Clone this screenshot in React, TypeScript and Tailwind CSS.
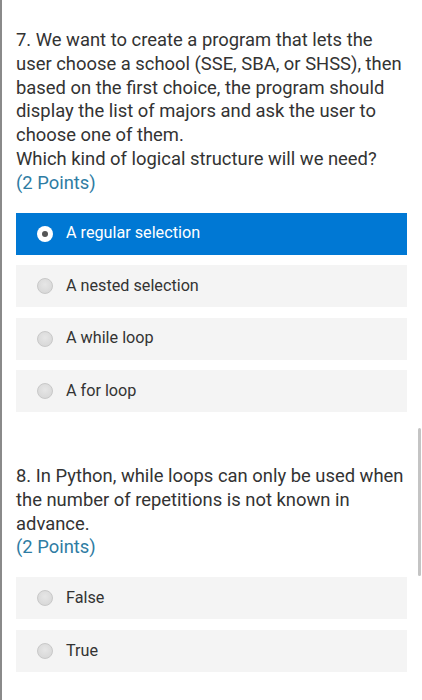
import React from "react";

const font = { fontFamily: "Roboto, 'Noto Sans', sans-serif" };

function Radio({ selected }: { selected?: boolean }) {
  if (selected) {
    return (
      <span className="flex h-4 w-4 shrink-0 items-center justify-center rounded-full bg-white">
        <span className="h-[6px] w-[6px] rounded-full bg-[#555555]" />
      </span>
    );
  }
  return (
    <span className="h-4 w-4 shrink-0 rounded-full border border-[#c8c8c8] bg-[radial-gradient(circle_at_50%_40%,#e6e6e6,#d4d4d4)]" />
  );
}

function Option({ label, selected }: { label: string; selected?: boolean }) {
  return (
    <div
      className={
        "flex h-[42px] items-center gap-[13px] pl-[21px] " +
        (selected ? "bg-[#0078d4] text-white" : "bg-[#f4f4f4] text-[#333333]")
      }
    >
      <Radio selected={selected} />
      <span className="text-[16.2px]">{label}</span>
    </div>
  );
}

export default function App() {
  return (
    <div
      className="relative h-[700px] w-[422px] overflow-hidden border-l-2 border-[#8a8a8a] bg-white"
      style={font}
    >
      <div className="pl-[14px] pr-[15px] pt-[28px]">
        <div className="text-[18.4px] leading-[23.8px] text-[#333333]">
          <p>
            7. We want to create a program that lets the user choose a school (SSE, SBA, or
            SHSS), then based on the first choice, the program should display the list of
            majors and ask the user to choose one of them.
          </p>
          <p>Which kind of logical structure will we need?</p>
          <p className="text-[#2e7ca3]">(2 Points)</p>
        </div>
        <div className="mt-[18px] flex flex-col gap-[10.5px]">
          <Option label="A regular selection" selected />
          <Option label="A nested selection" />
          <Option label="A while loop" />
          <Option label="A for loop" />
        </div>

        <div className="mt-[52px] text-[18.4px] leading-[23.8px] text-[#333333]">
          <p>
            8. In Python, while loops can only be used when the number of repetitions is not
            known in advance.
          </p>
          <p className="text-[#2e7ca3]">(2 Points)</p>
        </div>
        <div className="mt-[18px] flex flex-col gap-[10.5px]">
          <Option label="False" />
          <Option label="True" />
        </div>
      </div>
      <div className="absolute right-[1px] top-[428px] h-[148px] w-[3px] rounded-full bg-[#c4c4c4]" />
    </div>
  );
}
